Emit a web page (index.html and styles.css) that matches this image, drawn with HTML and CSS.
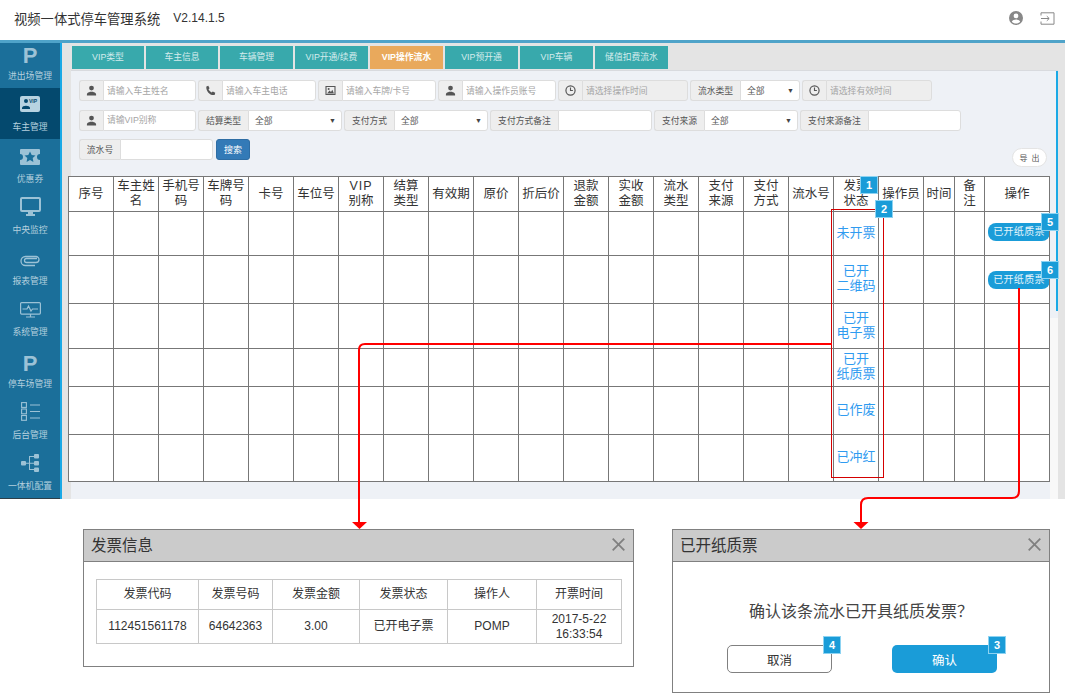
FILE: index.html
```html
<!DOCTYPE html>
<html lang="zh-CN">
<head>
  <meta charset="UTF-8" />
  <title>视频一体式停车管理系统</title>
  <link rel="stylesheet" href="styles.css">
</head>
<body>
  <svg class="defs" width="0" height="0">
    <symbol id="i-user" viewBox="0 0 12 12"><circle cx="6" cy="3.4" r="2.6"/><path d="M1 11.5V10c0-1.6 2.4-2 3.4-2.6h3.2C8.600 8 11 8.400 11 10v1.500z"/></symbol>
    <symbol id="i-phone" viewBox="0 0 12 12"><path d="M1.500 1.500 3.600.8 5 3.500 3.900 4.700c.5 1.300 1.800 2.800 3.300 3.500L8.500 7l2.700 1.500-.7 2.300C6 12 .6 6.500 1.500 1.500z"/></symbol>
    <symbol id="i-pic" viewBox="0 0 12 12"><path fill-rule="evenodd" d="M.5 1h11v10H.5zM1.700 2.200v7.600h8.600V2.200z"/><circle cx="4" cy="4.300" r="1.100"/><path d="M2.200 9.300 5 6l1.500 1.500L8 5.200l1.800 4.100z"/></symbol>
    <symbol id="i-time" viewBox="0 0 12 12"><circle cx="6" cy="6" r="5" fill="none" stroke="currentColor" stroke-width="1.300"/><path d="M6 2.800V6h2.600" fill="none" stroke="currentColor" stroke-width="1.200"/></symbol>
  </svg>

  <header class="topbar">
    <h1 class="app-title">视频一体式停车管理系统</h1>
    <span class="version">V2.14.1.5</span>
    <div class="top-icons">
      <svg width="14" height="14" viewBox="0 0 14 14" fill="#888"><path fill-rule="evenodd" d="M7 0a7 7 0 1 1 0 14A7 7 0 0 1 7 0zm0 2.500a2.400 2.400 0 1 0 0 4.800 2.400 2.400 0 0 0 0-4.800zM2.800 10.700c1 1.100 2.600 1.800 4.200 1.800s3.200-.7 4.200-1.800C10.800 9.200 8.500 8.500 7 8.500s-3.800.7-4.200 2.200z"/></svg>
      <svg width="15" height="13" viewBox="0 0 15 13" fill="none" stroke="#888" stroke-width="1"><path d="M1 3.500V.8h13v11.400H1V9.500M1 6.500h8M6.800 4.200 9.200 6.500 6.800 8.800"/></svg>
    </div>
  </header>

  <div class="app">
    <nav class="sidebar">
      <a class="nav-item nav-first"><span class="nav-p">P</span><span class="nav-label">进出场管理</span></a>
      <a class="nav-item nav-active">
        <svg class="nav-icon" width="20" height="17" viewBox="0 0 20 17"><rect width="20" height="16" rx="2" fill="currentColor"/><circle cx="6" cy="5" r="2" fill="#04496e"/><path d="M2 12c0-3 8-3 8 0v1H2z" fill="#04496e"/><text x="9" y="6.500" class="vip-mini">VIP</text></svg>
        <span class="nav-label">车主管理</span>
      </a>
      <a class="nav-item">
        <svg class="nav-icon" width="20" height="16" viewBox="0 0 20 16"><path fill="currentColor" fill-rule="evenodd" d="M1 0h18a1 1 0 0 1 1 1v4a3 3 0 0 0 0 6v4a1 1 0 0 1-1 1H1a1 1 0 0 1-1-1v-4a3 3 0 0 0 0-6V1a1 1 0 0 1 1-1zm9 2.500L8.300 6 4.500 6.500l2.800 2.600L6.600 13 10 11.100 13.400 13l-.7-3.900 2.800-2.600L11.700 6z"/></svg>
        <span class="nav-label">优惠券</span>
      </a>
      <a class="nav-item">
        <svg class="nav-icon" width="21" height="19" viewBox="0 0 21 19"><path fill="currentColor" fill-rule="evenodd" d="M2 0h17a2 2 0 0 1 2 2v11a2 2 0 0 1-2 2h-6v2h2v2H6v-2h2v-2H2a2 2 0 0 1-2-2V2a2 2 0 0 1 2-2zm0 2v11h17V2z"/></svg>
        <span class="nav-label">中央监控</span>
      </a>
      <a class="nav-item">
        <svg class="nav-icon" width="20" height="12" viewBox="0 0 20 12" fill="none" stroke="currentColor" stroke-width="1.300"><path d="M17 3.500H6.500a2 2 0 0 0 0 4H16a2.500 2.500 0 0 0 0-6H5.500a4.500 4.500 0 0 0 0 9H15"/></svg>
        <span class="nav-label">报表管理</span>
      </a>
      <a class="nav-item">
        <svg class="nav-icon" width="21" height="16" viewBox="0 0 21 16" fill="none" stroke="currentColor" stroke-width="1.200"><rect x=".6" y=".6" width="19.800" height="11.500" rx="1"/><path d="M2.500 7H7l1.500-3 2.500 5 1.500-2H18M6 15h9M10.500 12v3" /></svg>
        <span class="nav-label">系统管理</span>
      </a>
      <a class="nav-item"><span class="nav-p">P</span><span class="nav-label">停车场管理</span></a>
      <a class="nav-item">
        <svg class="nav-icon" width="19" height="19" viewBox="0 0 19 19" fill="none" stroke="currentColor" stroke-width="1.100"><rect x=".6" y=".6" width="4.800" height="4.800"/><rect x=".6" y="7" width="4.800" height="4.800"/><rect x=".6" y="13.500" width="4.800" height="4.800"/><path d="M9 3h10M9 9.500h10M9 16h10"/></svg>
        <span class="nav-label">后台管理</span>
      </a>
      <a class="nav-item">
        <svg class="nav-icon" width="18" height="18" viewBox="0 0 18 18" fill="currentColor"><rect y="7" width="5" height="4.500" rx="1"/><rect x="13" y="0" width="5" height="4.500" rx="1"/><rect x="13" y="7" width="5" height="4.500" rx="1"/><rect x="13" y="13.500" width="5" height="4.500" rx="1"/><path d="M5 8.700h3V2h5v1H9v5.700h4v1H9V15h4v1H8V9.700H5z"/></svg>
        <span class="nav-label">一体机配置</span>
      </a>
    </nav>
    <div class="nav-edge"></div>

    <main class="main">
      <div class="tabs">
        <a class="tab tab-sm">VIP类型</a>
        <a class="tab tab-sm">车主信息</a>
        <a class="tab">车辆管理</a>
        <a class="tab">VIP开通/续费</a>
        <a class="tab tab-active">VIP操作流水</a>
        <a class="tab">VIP预开通</a>
        <a class="tab">VIP车辆</a>
        <a class="tab">储值扣费流水</a>
      </div>

      <section class="panel">
        <div class="scroll-thumb"></div>
        <div class="scroll-rest"></div>

        <div class="filter-row">
          <div class="group w117"><span class="addon"><svg width="11" height="11"><use href="#i-user"/></svg></span><input class="field" placeholder="请输入车主姓名"></div>
          <div class="group w118"><span class="addon"><svg width="11" height="11"><use href="#i-phone"/></svg></span><input class="field" placeholder="请输入车主电话"></div>
          <div class="group w118"><span class="addon"><svg width="11" height="11"><use href="#i-pic"/></svg></span><input class="field" placeholder="请输入车牌/卡号"></div>
          <div class="group w118"><span class="addon"><svg width="11" height="11"><use href="#i-user"/></svg></span><input class="field" placeholder="请输入操作员账号"></div>
          <div class="group w130"><span class="addon"><svg width="11" height="11"><use href="#i-time"/></svg></span><input class="field field-off" placeholder="请选择操作时间" disabled></div>
          <div class="group w110"><span class="addon addon-md">流水类型</span><div class="sel">全部<span class="caret">▼</span></div></div>
          <div class="group w130"><span class="addon"><svg width="11" height="11"><use href="#i-time"/></svg></span><input class="field field-off" placeholder="请选择有效时间" disabled></div>
        </div>

        <div class="filter-row">
          <div class="group w117"><span class="addon"><svg width="11" height="11"><use href="#i-user"/></svg></span><input class="field" placeholder="请输VIP别称"></div>
          <div class="group w144"><span class="addon addon-md">结算类型</span><div class="sel">全部<span class="caret">▼</span></div></div>
          <div class="group w144"><span class="addon addon-md">支付方式</span><div class="sel">全部<span class="caret">▼</span></div></div>
          <div class="group w162"><span class="addon addon-lg">支付方式备注</span><input class="field"></div>
          <div class="group w144"><span class="addon addon-md">支付来源</span><div class="sel">全部<span class="caret">▼</span></div></div>
          <div class="group w161"><span class="addon addon-lg">支付来源备注</span><input class="field"></div>
        </div>

        <div class="filter-row">
          <div class="group w134"><span class="addon addon-sm">流水号</span><input class="field"></div>
          <button class="btn-search">搜索</button>
          <button class="btn-export">导 出</button>
        </div>

        <table class="grid">
          <colgroup>
            <col class="c45"><col class="c45"><col class="c45"><col class="c45"><col class="c45"><col class="c45">
            <col class="c45"><col class="c45"><col class="c45"><col class="c45"><col class="c45"><col class="c45">
            <col class="c45"><col class="c45"><col class="c45"><col class="c45"><col class="c45"><col class="c45">
            <col class="c45"><col class="c31"><col class="c30"><col class="c65">
          </colgroup>
          <thead>
            <tr class="h35">
              <th>序号</th><th>车主姓<br>名</th><th>手机号<br>码</th><th>车牌号<br>码</th><th>卡号</th><th>车位号</th>
              <th><span class="spaced">VIP</span><br>别称</th><th>结算<br>类型</th><th>有效期</th><th>原价</th><th>折后价</th>
              <th>退款<br>金额</th><th>实收<br>金额</th><th>流水<br>类型</th><th>支付<br>来源</th><th>支付<br>方式</th>
              <th>流水号</th><th>发票<br>状态</th><th>操作员</th><th>时间</th><th>备<br>注</th><th>操作</th>
            </tr>
          </thead>
          <tbody>
            <tr class="h44">
              <td></td><td></td><td></td><td></td><td></td><td></td><td></td><td></td><td></td><td></td><td></td><td></td><td></td><td></td><td></td><td></td><td></td>
              <td class="state">未开票</td><td></td><td></td><td></td><td class="op"><a class="btn-paper btn-up">已开纸质票</a></td>
            </tr>
            <tr class="h48">
              <td></td><td></td><td></td><td></td><td></td><td></td><td></td><td></td><td></td><td></td><td></td><td></td><td></td><td></td><td></td><td></td><td></td>
              <td class="state">已开<br>二维码</td><td></td><td></td><td></td><td class="op"><a class="btn-paper">已开纸质票</a></td>
            </tr>
            <tr class="h45">
              <td></td><td></td><td></td><td></td><td></td><td></td><td></td><td></td><td></td><td></td><td></td><td></td><td></td><td></td><td></td><td></td><td></td>
              <td class="state">已开<br>电子票</td><td></td><td></td><td></td><td></td>
            </tr>
            <tr class="h38">
              <td></td><td></td><td></td><td></td><td></td><td></td><td></td><td></td><td></td><td></td><td></td><td></td><td></td><td></td><td></td><td></td><td></td>
              <td class="state">已开<br>纸质票</td><td></td><td></td><td></td><td></td>
            </tr>
            <tr class="h48">
              <td></td><td></td><td></td><td></td><td></td><td></td><td></td><td></td><td></td><td></td><td></td><td></td><td></td><td></td><td></td><td></td><td></td>
              <td class="state">已作废</td><td></td><td></td><td></td><td></td>
            </tr>
            <tr class="h47">
              <td></td><td></td><td></td><td></td><td></td><td></td><td></td><td></td><td></td><td></td><td></td><td></td><td></td><td></td><td></td><td></td><td></td>
              <td class="state">已冲红</td><td></td><td></td><td></td><td></td>
            </tr>
          </tbody>
        </table>
      </section>
    </main>
  </div>

  <div class="dialogs">
    <section class="dialog dialog-info">
      <div class="dialog-head">
        <h2>发票信息</h2>
        <svg width="13" height="13" viewBox="0 0 13 13" stroke="#808080" stroke-width="1.800"><path d="M.7.7l11.600 11.600M12.300.7.700 12.300"/></svg>
      </div>
      <table class="info-table">
        <tr class="info-head"><td class="w102">发票代码</td><td class="w74">发票号码</td><td class="w87">发票金额</td><td class="w88">发票状态</td><td class="w89">操作人</td><td>开票时间</td></tr>
        <tr class="info-row"><td>112451561178</td><td>64642363</td><td>3.00</td><td>已开电子票</td><td>POMP</td><td>2017-5-22<br>16:33:54</td></tr>
      </table>
    </section>

    <section class="dialog dialog-confirm">
      <div class="dialog-head">
        <h2>已开纸质票</h2>
        <svg width="13" height="13" viewBox="0 0 13 13" stroke="#808080" stroke-width="1.800"><path d="M.7.7l11.600 11.600M12.300.7.700 12.300"/></svg>
      </div>
      <p class="confirm-text">确认该条流水已开具纸质发票？</p>
      <div class="confirm-actions">
        <button class="btn-cancel">取消</button>
        <button class="btn-ok">确认</button>
      </div>
    </section>
  </div>

  <!-- annotation layer over the page -->
  <svg class="notes" width="1065" height="693" viewBox="0 0 1065 693" fill="none">
    <rect x="831.500" y="209.500" width="52" height="268" stroke="#d40000"/>
    <path d="M832 344H365Q359 344 359 350V522" stroke="#f00" stroke-width="2"/>
    <path d="M352 522h15l-7.500 7z" fill="#f00"/>
    <path d="M1019 288V491Q1019 498 1012 498H868Q861 498 861 505V522" stroke="#f00" stroke-width="2"/>
    <path d="M853.500 522h15l-7.500 7z" fill="#f00"/>
  </svg>
  <span class="badge b1">1</span>
  <span class="badge b2">2</span>
  <span class="badge b3">3</span>
  <span class="badge b4">4</span>
  <span class="badge b5">5</span>
  <span class="badge b6">6</span>
</body>
</html>
```

FILE: styles.css
```css
* {
  box-sizing: border-box;
}
html, body {
  margin: 0;
  height: 693px;
  overflow: hidden;
  background: #fff;
}
body {
  position: relative;
  font-family: "Liberation Sans", "Noto Sans CJK SC", sans-serif;
  color: #333;
}
.defs {
  position: absolute;
}
input, button {
  font-family: inherit;
}

/* top bar */
.topbar {
  height: 43px;
  display: flex;
  align-items: center;
  padding: 10px 10px 14px 14px;
  border-bottom: 3px solid #4fa3c9;
  box-shadow: inset 0 -1px 0 #fff;
}
.app-title {
  margin: 0;
  font-size: 13.300px;
  font-weight: 400;
  color: #333;
}
.version {
  margin-left: 13px;
  font-size: 12px;
}
.top-icons {
  margin-left: auto;
  display: flex;
  align-items: center;
  gap: 17px;
}

/* app */
.app {
  height: 456px;
  display: flex;
}
.sidebar {
  width: 60px;
  background: #1b6f9a;
  border-bottom: 1px solid #2c3e48;
  display: flex;
  flex-direction: column;
}
.nav-edge {
  width: 2px;
  background: #1aa9e6;
}
.nav-item {
  height: 51.250px;
  flex: none;
  display: flex;
  flex-direction: column;
  align-items: center;
  justify-content: flex-end;
  color: #9cc2d6;
  padding-bottom: 4px;
}
.nav-first {
  height: 45px;
}
.nav-active {
  background: #04496e;
  color: #b7d3e1;
}
.nav-label {
  height: 16px;
  line-height: 16px;
  font-size: 8.800px;
  white-space: nowrap;
  color: #b5d0de;
}
.nav-icon {
  flex: none;
  margin-bottom: 6px;
}
.nav-p {
  font-size: 22px;
  line-height: 18px;
  height: 18px;
  font-weight: 700;
  margin-bottom: 3px;
  color: #9cc2d6;
}
.vip-mini {
  font-size: 5px;
  font-weight: 700;
  fill: #04496e;
}

.main {
  flex: 1;
  background: #e4e4e4;
  padding-top: 3px;
  min-width: 0;
}
.tabs {
  display: flex;
  gap: 2px;
  margin-left: 10px;
  height: 23px;
}
.tab {
  width: 73px;
  background: #38a9ac;
  color: #d4ecec;
  font-size: 8.800px;
  line-height: 23px;
  text-align: center;
  white-space: nowrap;
}
.tab-sm {
  width: 72px;
}
.tab-active {
  background: #e9a95c;
  color: #fff;
  font-weight: 700;
}

.panel {
  position: relative;
  margin: 1px 0 0 9px;
  width: 987px;
  height: 429px;
  background: #eef1f6;
  padding: 9px 0 0 8px;
  border-top: 1px solid #d8dade;
}
.scroll-thumb {
  position: absolute;
  top: 0;
  right: 0;
  width: 2px;
  height: 240px;
  background: #1aa9e6;
}
.scroll-rest {
  position: absolute;
  top: 247px;
  bottom: 0;
  left: 979px;
  right: 0;
  background: #f8f8f8;
}

.filter-row {
  display: flex;
  gap: 2px;
  height: 21px;
  margin-bottom: 8.500px;
  align-items: flex-start;
}
.group {
  display: flex;
  height: 21px;
  flex: none;
}
.w117 { width: 117px; }
.w118 { width: 118px; }
.w130 { width: 130px; }
.w110 { width: 110px; }
.w144 { width: 144px; }
.w162 { width: 162px; }
.w161 { width: 161px; }
.w134 { width: 134px; }

.addon {
  flex: none;
  width: 24px;
  display: flex;
  align-items: center;
  justify-content: center;
  background: #eee;
  border: 1px solid #ddd;
  border-right: 0;
  border-radius: 3px 0 0 3px;
  color: #555;
  fill: #555;
  font-size: 8.800px;
  white-space: nowrap;
}
.addon-md { width: 50px; }
.addon-lg { width: 68px; }
.addon-sm { width: 41px; }
.field, .sel {
  flex: 1;
  min-width: 0;
  height: 21px;
  padding: 0 3px;
  background: #fff;
  border: 1px solid #ddd;
  border-radius: 0 3px 3px 0;
  font-size: 8.800px;
  color: #555;
  outline: none;
}
.field::placeholder {
  color: #a5a5a5;
  opacity: 1;
}
.field-off {
  background: #eee;
}
.sel {
  display: flex;
  align-items: center;
  justify-content: space-between;
  padding: 0 5px 0 6px;
}
.caret {
  font-size: 7px;
  color: #444;
}
.btn-search {
  flex: none;
  margin-left: 1px;
  width: 34px;
  height: 21px;
  padding: 0;
  background: #337ab7;
  color: #fff;
  border: 1px solid #2e6da4;
  border-radius: 3px;
  font-size: 9px;
}
.btn-export {
  flex: none;
  margin: 9px 11px 0 auto;
  width: 35px;
  height: 19px;
  padding: 0;
  background: #fff;
  color: #555;
  border: 1px solid #e4e4e4;
  border-radius: 10px;
  font-size: 8px;
  word-spacing: 2px;
}

/* main table */
.grid {
  position: relative;
  margin: 16px 0 0 -11px;
  width: 982px;
  table-layout: fixed;
  border-collapse: collapse;
  background: #fff;
}
.grid th, .grid td {
  border: 1px solid #777;
  padding: 0;
  text-align: center;
  vertical-align: middle;
  font-size: 12.500px;
  font-weight: 400;
  line-height: 15px;
  color: #333;
  white-space: nowrap;
}
.c45 { width: 45px; }
.c31 { width: 31px; }
.c30 { width: 30px; }
.c65 { width: 65px; }
.h35 { height: 35px; }
.h44 { height: 44px; }
.h48 { height: 48px; }
.h45 { height: 45px; }
.h38 { height: 38px; }
.h47 { height: 47px; }
.spaced {
  letter-spacing: 1px;
}
.grid .state {
  color: #2f9bf0;
  font-size: 13px;
  padding-bottom: 3px;
}
.btn-paper {
  display: block;
  width: 62px;
  height: 18px;
  margin-left: 3px;
  background: #1a9cd8;
  color: #e4f4fb;
  border-radius: 8px;
  font-size: 10px;
  line-height: 18px;
  letter-spacing: .3px;
  white-space: nowrap;
}
.btn-up {
  margin-bottom: 4px;
}

/* dialogs */
.dialogs {
  display: flex;
  align-items: flex-start;
  padding: 30px 0 0 83px;
  gap: 38px;
}
.dialog {
  border: 1px solid #808080;
  background: #fff;
}
.dialog-info {
  width: 551px;
  height: 138px;
}
.dialog-confirm {
  width: 378px;
  height: 164px;
}
.dialog-head {
  height: 32px;
  background: #cbcbcb;
  border-bottom: 1px solid #808080;
  display: flex;
  align-items: center;
  justify-content: space-between;
  padding: 0 8px 3px 7px;
}
.dialog-head h2 {
  margin: 0;
  font-size: 15.500px;
  font-weight: 400;
  color: #333;
}
.info-table {
  margin: 17px 0 0 12px;
  width: 526px;
  height: 65px;
  table-layout: fixed;
  border-collapse: collapse;
}
.info-table td {
  border: 1px solid #c8c8c8;
  padding: 0;
  text-align: center;
  font-size: 12px;
  line-height: 15px;
  color: #333;
}
.info-head { height: 30px; }
.info-row { height: 34px; }
.w102 { width: 102px; }
.w74 { width: 74px; }
.w87 { width: 87px; }
.w88 { width: 88px; }
.w89 { width: 89px; }
.confirm-text {
  margin: 38px 0 0;
  text-align: center;
  font-size: 16px;
  line-height: 24px;
  color: #444;
}
.confirm-actions {
  display: flex;
  gap: 60px;
  margin: 21px 0 0 54px;
}
.btn-cancel, .btn-ok {
  width: 105px;
  height: 28px;
  padding: 0;
  border-radius: 5px;
  font-size: 12.500px;
}
.btn-cancel {
  background: #fff;
  color: #333;
  border: 1px solid #808080;
}
.btn-ok {
  background: #1a9cd8;
  color: #fff;
  border: 0;
}

/* annotations */
.notes {
  position: absolute;
  top: 0;
  left: 0;
}
.badge {
  position: absolute;
  width: 18px;
  height: 18px;
  background: #1a9cd8;
  border: 1px solid #8dd3f2;
  color: #fff;
  font-size: 11px;
  font-weight: 700;
  line-height: 16px;
  text-align: center;
}
.b1 { left: 860px; top: 176px; }
.b2 { left: 875px; top: 200px; }
.b3 { left: 988px; top: 636px; }
.b4 { left: 823px; top: 636px; }
.b5 { left: 1041px; top: 213px; }
.b6 { left: 1041px; top: 261px; }
```
